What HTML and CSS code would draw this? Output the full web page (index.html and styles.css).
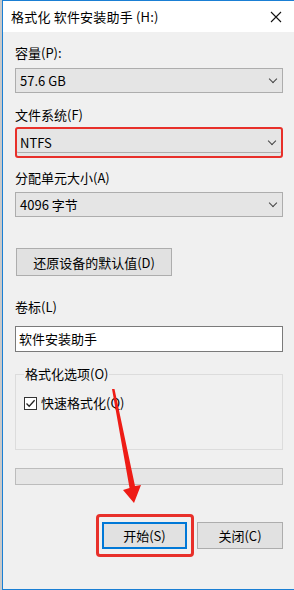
FILE: index.html
```html
<!doctype html>
<html lang="zh-CN">
<head>
<meta charset="utf-8">
<meta name="viewport" content="width=device-width, initial-scale=1">
<title>格式化 软件安装助手 (H:)</title>
<link rel="stylesheet" href="styles.css">
</head>
<body>

	<div class="win">

		<div class="titlebar">
			<span class="title">格式化 软件安装助手 (H:)</span>
			<svg class="close" width="12" height="12" viewBox="0 0 12 12"><path d="M1 1 L11 11 M11 1 L1 11" stroke="#111" stroke-width="1.1" fill="none"/></svg>
		</div>

		<div class="content">

			<div class="label lbl-cap">容量(P):</div>
			<div class="select sel-cap">57.6 GB<span class="chev"></span></div>

			<div class="label lbl-fs">文件系统(F)</div>
			<div class="select sel-fs">NTFS<span class="chev"></span></div>

			<div class="label lbl-unit">分配单元大小(A)</div>
			<div class="select sel-unit">4096 字节<span class="chev"></span></div>

			<button class="btn btn-reset">还原设备的默认值(D)</button>

			<div class="label lbl-vol">卷标(L)</div>
			<div class="textbox">软件安装助手</div>

			<fieldset class="group">
				<legend>格式化选项(O)</legend>
				<label class="check">
					<span class="box"><svg width="11" height="11" viewBox="0 0 11 11"><path d="M1.5 5.5 L4.2 8.3 L9.6 2.2" stroke="#222" stroke-width="1.3" fill="none"/></svg></span>
					快速格式化(Q)
				</label>
			</fieldset>

			<div class="progress"></div>

			<div class="actions">
				<span class="mark"><button class="btn btn-start">开始(S)</button></span>
				<button class="btn btn-close">关闭(C)</button>
			</div>

		</div>

		<!-- annotation arrow drawn over the dialog -->
		<svg class="arrow" width="294" height="590" viewBox="0 0 294 590">
			<polygon points="112,389 114.5,389 135,486 141,485 134,503 123,490 129.5,488" fill="#ee1c16"/>
		</svg>

	</div>

</body>
</html>
```
FILE: styles.css
```css
html, body { margin: 0; padding: 0; }
body { background: #c9c9c9; font: 13px "Noto Sans CJK SC", "DejaVu Sans", sans-serif; color: #000; width: 294px; height: 590px; overflow: hidden; }

.win { position: relative; box-sizing: border-box; height: 590px; margin-left: 2px; border: 1px solid #1a7fd4; border-right: none; background: #f0f0f0; display: flex; flex-direction: column; }

.titlebar { height: 31px; background: #fff; display: flex; align-items: center; justify-content: space-between; padding: 0 12px 0 8px; flex: none; }
.title { font-size: 13px; line-height: 16px; letter-spacing: 0.2px; }
.close { margin-top: 1px; }

.content { padding: 0 9px 0 12px; display: flex; flex-direction: column; align-items: flex-start; }

.label { line-height: 16px; height: 16px; }
.lbl-cap { margin-top: 13px; }
.lbl-fs { margin-top: 14px; }
.lbl-unit { margin-top: 12px; }
.lbl-vol { margin-top: 23px; }

.select { position: relative; box-sizing: border-box; width: 268px; height: 25px; line-height: 23px; padding-left: 4px; background: #e5e5e5; border: 1px solid #adadad; }
.sel-cap { margin-top: 7px; }
.sel-fs { margin-top: 4px; height: 31px; line-height: 27px; border: 2px solid #e8302a; border-radius: 3px; box-shadow: inset 0 -3px 0 #e5e5e5, inset 0 -4px 0 #adadad; padding-left: 3px; }
.sel-unit { margin-top: 6px; }
.chev { position: absolute; right: 6px; top: 50%; width: 5px; height: 5px; margin-top: -5px; border-right: 1px solid #444; border-bottom: 1px solid #444; transform: rotate(45deg); }

.btn { box-sizing: border-box; font: inherit; color: #000; background: #e1e1e1; border: 1px solid #adadad; padding: 0; cursor: default; }
.btn-reset { margin-top: 31px; width: 156px; height: 28px; margin-left: 1px; }

.textbox { margin-top: 11px; box-sizing: border-box; width: 268px; height: 26px; line-height: 24px; padding-left: 3px; background: #fff; border: 1px solid #7a7a7a; }

.group { margin: 14px 0 0 0; box-sizing: border-box; width: 268px; height: 84px; padding: 13px 8px 0 8px; border: 1px solid #dcdcdc; }
.group legend { padding: 0 1px; line-height: 16px; }
.check { display: flex; align-items: center; gap: 4px; line-height: 16px; }
.box { box-sizing: border-box; width: 13px; height: 13px; border: 1px solid #333; background: #fff; display: flex; align-items: center; justify-content: center; }

.progress { margin-top: 18px; box-sizing: border-box; width: 268px; height: 17px; background: #e6e6e6; border: 1px solid #bcbcbc; }

.actions { margin-top: 29px; width: 268px; display: flex; justify-content: flex-end; align-items: center; gap: 3px; }
.mark { display: block; border: 3px solid #e8302a; border-radius: 4px; padding: 5px 4px 5px 3px; }
.btn-start { display: block; width: 85px; height: 27px; border: 2px solid #0078d7; }
.btn-close { width: 86px; height: 27px; }

.arrow { position: absolute; left: -3px; top: -1px; pointer-events: none; }
```
